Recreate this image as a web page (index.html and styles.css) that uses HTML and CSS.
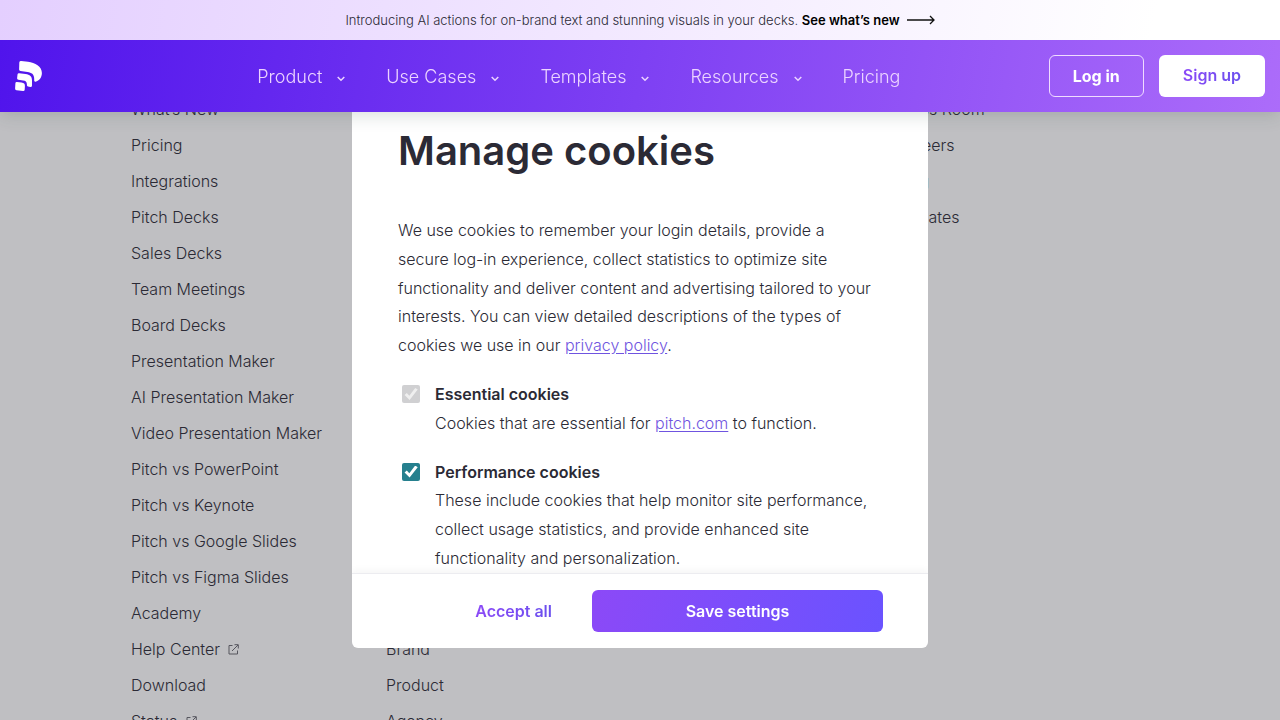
FILE: index.html
```html
<!DOCTYPE html>
<html lang="en">
<head>
<meta charset="utf-8">
<meta name="viewport" content="width=device-width, initial-scale=1">
<title>Pitch</title>
<link rel="stylesheet" href="styles.css">
</head>
<body>
<header class="top">
  <p class="banner">
    <span>Introducing AI actions for on-brand text and stunning visuals in your decks. <a class="banner-link" href="#">See what’s new</a></span>
    <svg class="arrow" width="28" height="10" viewBox="0 0 28 10" aria-hidden="true"><path d="M0 5H27M23 1L27 5L23 9" /></svg>
  </p>
  <div class="bar">
    <a class="logo" href="#" aria-label="Pitch home">
      <svg width="28" height="32" viewBox="0 0 28 32" aria-hidden="true">
        <path d="M4.300 2.500Q4.500 1 6.200 1.100L13 1.700C20 2.500 26.900 6.200 26.900 13C26.900 17.500 24.300 20.700 20.500 21.700Q19.200 22 19.200 20.600V19C19.200 13.800 16.500 12.600 12.500 11.900L5.500 10.900Q4.100 10.700 4.100 9.500Z" />
        <path d="M2.500 14.500Q2.700 13 4.200 13.200L10.500 14.100C15 14.800 17 16.500 17 20.500V25.500Q16.900 27.200 15.300 27L13 26.600Q11.900 26.400 11.900 25V24.300C11.900 21.500 10.500 20.700 8 20.400L3.400 19.800Q2 19.600 2.100 18.300Z" />
        <path d="M.4 23.200Q.5 21.700 2 21.900L6.500 22.500C9 22.900 10 23.800 9.900 26L9.700 29.800Q9.500 31.300 8 31.100L1.500 30.200Q0 29.900 .1 28.400Z" />
      </svg>
    </a>
    <nav class="menu">
      <button class="menu-item" type="button">Product <svg class="chev" width="8" height="6" viewBox="0 0 8 6" aria-hidden="true"><path d="M.7 1L4 4.300L7.300 1" /></svg></button>
      <button class="menu-item" type="button">Use Cases <svg class="chev" width="8" height="6" viewBox="0 0 8 6" aria-hidden="true"><path d="M.7 1L4 4.300L7.300 1" /></svg></button>
      <button class="menu-item" type="button">Templates <svg class="chev" width="8" height="6" viewBox="0 0 8 6" aria-hidden="true"><path d="M.7 1L4 4.300L7.300 1" /></svg></button>
      <button class="menu-item" type="button">Resources <svg class="chev" width="8" height="6" viewBox="0 0 8 6" aria-hidden="true"><path d="M.7 1L4 4.300L7.300 1" /></svg></button>
      <a class="menu-item" href="#">Pricing</a>
    </nav>
    <div class="account">
      <a class="btn btn-outline" href="#">Log in</a>
      <a class="btn btn-white" href="#"><span class="grad-text">Sign up</span></a>
    </div>
  </div>
</header>

<footer class="footer">
  <ul class="col">
    <li><a href="#">What’s New</a></li>
    <li><a href="#">Pricing</a></li>
    <li><a href="#">Integrations</a></li>
    <li><a href="#">Pitch Decks</a></li>
    <li><a href="#">Sales Decks</a></li>
    <li><a href="#">Team Meetings</a></li>
    <li><a href="#">Board Decks</a></li>
    <li><a href="#">Presentation Maker</a></li>
    <li><a href="#">AI Presentation Maker</a></li>
    <li><a href="#">Video Presentation Maker</a></li>
    <li><a href="#">Pitch vs PowerPoint</a></li>
    <li><a href="#">Pitch vs Keynote</a></li>
    <li><a href="#">Pitch vs Google Slides</a></li>
    <li><a href="#">Pitch vs Figma Slides</a></li>
    <li><a href="#">Academy</a></li>
    <li><a href="#">Help Center <svg class="ext" width="11" height="11" viewBox="0 0 11 11" aria-hidden="true"><path d="M4.500 1.500H1V10H9.500V6.500M4 7L10 1M6.500 .7H10.300V4.500" /></svg></a></li>
    <li><a href="#">Download</a></li>
    <li><a href="#">Status <svg class="ext" width="11" height="11" viewBox="0 0 11 11" aria-hidden="true"><path d="M4.500 1.500H1V10H9.500V6.500M4 7L10 1M6.500 .7H10.300V4.500" /></svg></a></li>
  </ul>
  <ul class="col col-low">
    <li><a href="#">Brand</a></li>
    <li><a href="#">Product</a></li>
    <li><a href="#">Agency</a></li>
  </ul>
  <ul class="col col-last">
    <li><a href="#">Press Room</a></li>
    <li><a href="#">Careers</a></li>
    <li><a href="#">Blog</a></li>
    <li><a href="#">Affiliates</a></li>
  </ul>
</footer>

<div class="overlay">
  <form class="dialog" role="dialog" aria-labelledby="dialog-title">
    <div class="dialog-body">
      <h2 class="dialog-title" id="dialog-title">Manage cookies</h2>
      <p class="intro">We use cookies to remember your login details, provide a<br>secure log-in experience, collect statistics to optimize site<br>functionality and deliver content and advertising tailored to your<br>interests. You can view detailed descriptions of the types of<br>cookies we use in our <a class="link" href="#">privacy policy</a>.</p>
      <div class="option">
        <input class="check" type="checkbox" id="essential" checked disabled>
        <div>
          <label class="option-name" for="essential">Essential cookies</label>
          <p class="option-text">Cookies that are essential for <a class="link" href="#">pitch.com</a> to function.</p>
        </div>
      </div>
      <div class="option">
        <input class="check" type="checkbox" id="performance" checked>
        <div>
          <label class="option-name" for="performance">Performance cookies</label>
          <p class="option-text">These include cookies that help monitor site performance,<br>collect usage statistics, and provide enhanced site<br>functionality and personalization.</p>
        </div>
      </div>
    </div>
    <div class="dialog-foot">
      <button class="btn btn-text" type="button"><span class="grad-text">Accept all</span></button>
      <button class="btn btn-primary" type="submit">Save settings</button>
    </div>
  </form>
</div>
</body>
</html>
```
FILE: styles.css
```css
* { box-sizing: border-box; }
body {
  margin: 0;
  height: 100vh;
  overflow: hidden;
  background: #fff;
  color: #2b2a35;
  font: 300 16px/36px Inter, sans-serif;
}
p, ul, h2 { margin: 0; padding: 0; }
button { font: inherit; border: 0; background: none; cursor: pointer; }
a { color: inherit; text-decoration: none; }
svg { fill: none; stroke: currentColor; flex: none; }

.top {
  position: fixed;
  inset: 0 0 auto;
  z-index: 3;
  box-shadow: 0 4px 16px rgba(40, 60, 50, 0.16);
}
.banner {
  display: flex;
  align-items: center;
  justify-content: center;
  gap: 7px;
  height: 40px;
  font-size: 13px;
  line-height: 20px;
  background: linear-gradient(100deg, #e4cfff, #fff 90%);
}
.banner-link { color: #000; font-weight: 600; }
.arrow { color: #111; stroke-width: 1.3; }
.bar {
  display: flex;
  align-items: center;
  justify-content: space-between;
  height: 72px;
  padding: 0 15px;
  background: linear-gradient(100deg, #5014ec, #ac6cfa);
}
.logo { display: flex; width: 94px; color: #fff; }
.logo svg { fill: currentColor; stroke: none; }
.menu { display: flex; gap: 41px; padding-top: 1px; }
.menu-item {
  display: flex;
  align-items: center;
  gap: 15px;
  padding: 0;
  color: #ecd4ff;
  font-size: 18px;
  line-height: 24px;
}
.chev { margin-top: 5px; stroke-width: 1.5; }
.account { display: flex; justify-content: flex-end; gap: 15px; }
.btn {
  height: 42px;
  padding: 0 24px;
  border-radius: 6px;
  font-size: 16px;
  font-weight: 600;
  line-height: 40px;
}
.btn-outline { border: 1px solid #f0dcff; color: #fff; font-weight: 700; padding: 0 23px; }
.btn-white { background: #fff; }
.grad-text {
  background: linear-gradient(100deg, #8c49f7, #6a50ee);
  background-clip: text;
  -webkit-background-clip: text;
  color: transparent;
}

.footer {
  display: grid;
  grid-template-columns: repeat(4, 1fr);
  max-width: 1020px;
  margin: 91px auto 0;
}
.col { list-style: none; padding-left: 1px; white-space: nowrap; }
.col-low { align-self: end; }
.col-last { grid-column: 4; }
.ext { margin-left: 4px; opacity: 0.7; }

.overlay {
  position: fixed;
  inset: 0;
  z-index: 2;
  display: flex;
  align-items: center;
  justify-content: center;
  background: rgba(43, 42, 53, 0.3);
}
.dialog {
  display: flex;
  flex-direction: column;
  width: 576px;
  max-width: 100%;
  height: 80vh;
  overflow: hidden;
  border-radius: 6px;
  background: #fff;
}
.dialog-body {
  flex: 1;
  min-height: 0;
  overflow: hidden;
  padding: 54px 46px 0;
  line-height: 1.8;
}
.dialog-title {
  margin-bottom: 40px;
  font-size: 40px;
  font-weight: 600;
  line-height: 50px;
}
.intro { margin-bottom: 20px; }
.link { color: #6f54e0; text-decoration: underline; text-underline-offset: 2px; }
.option { display: flex; gap: 15px; margin-bottom: 20px; white-space: nowrap; }
.check {
  appearance: none;
  flex: none;
  width: 18px;
  height: 18px;
  margin: 5px 0 0 4px;
  border-radius: 2px;
  background: #26808e;
}
.check::before {
  content: "";
  display: block;
  width: 14px;
  height: 12px;
  margin: 3px 2px;
  background: #fff;
  clip-path: polygon(4% 58%, 20% 42%, 38% 64%, 80% 0, 98% 13%, 40% 100%);
}
.check:disabled { background: #d0d0d2; }
.check:disabled::before { background: #efefef; }
.option-name { display: block; font-weight: 600; }
.dialog-foot {
  display: flex;
  justify-content: flex-end;
  gap: 16px;
  padding: 16px 45px;
  border-top: 1px solid #ececf0;
  box-shadow: 0 -2px 8px rgba(30, 30, 40, 0.05);
}
.btn-primary {
  width: 291px;
  color: #fff;
  background: linear-gradient(110deg, #8c49f7, #6a53ff);
}
```
